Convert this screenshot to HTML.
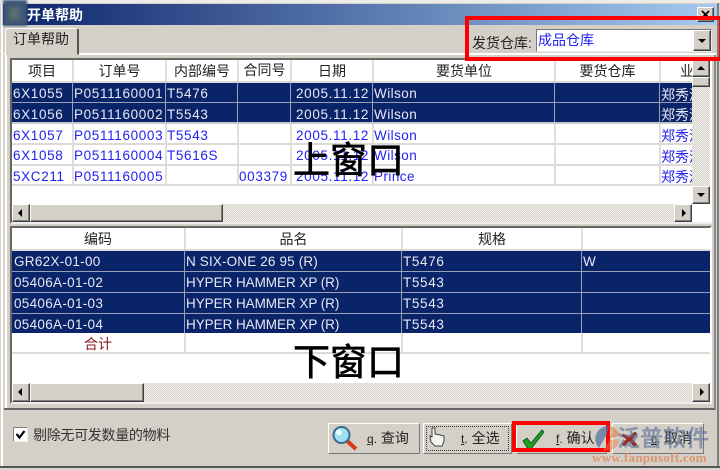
<!DOCTYPE html>
<html><head><meta charset="utf-8">
<style>
html,body{margin:0;padding:0;background:#d4d0c8}
#p{position:relative;width:720px;height:470px;overflow:hidden;background:#d4d0c8;font-family:"Liberation Sans","Noto Sans CJK SC",sans-serif;font-size:14px;color:#111;filter:blur(.35px)}
#p div{position:absolute;box-sizing:border-box}
.t{white-space:nowrap;line-height:20px;height:20px;letter-spacing:0}
.d{white-space:nowrap;line-height:20px;height:20px;font-size:13.5px;letter-spacing:.65px}
.m{letter-spacing:.3px}
.n{letter-spacing:-.05px}
.o{letter-spacing:.45px}
.nav{background:#0a246a}
.w{color:#e8e8f2}
.b{color:#2222ee}
.h{white-space:nowrap;text-align:center;line-height:20px;height:20px;color:#222}
.vl{width:2px;background:#e0ded8}
.hl{height:2px;background:#dcdad4}
.raised{background:#d4d0c8;border:1px solid;border-color:#fff #404040 #404040 #fff;box-shadow:inset -1px -1px 0 #808080}
.sb{background:repeating-conic-gradient(#d4d0c8 0 25%,#f4f2ee 0 50%) 0 0/2px 2px}
.btn{background:#d4d0c8;border:1px solid;border-color:#fff #777 #777 #fff;top:423px;height:31px}
.lbl{top:428px;line-height:20px;white-space:nowrap;color:#222}
.lbl u,.lbl i{font-size:12px;font-style:normal}
.big{font-size:37px;line-height:50px;color:#000;white-space:nowrap;-webkit-text-stroke:.7px #000}
u{text-decoration:underline}
</style></head><body><div id="p">

<!-- frame -->
<div style="left:0;top:0;width:720px;height:3px;background:#eeece8"></div>
<div style="left:0;top:466px;width:720px;height:4px;background:#d8d6d0;border-top:2px solid #555"></div>
<div style="left:1px;top:3px;width:2px;height:463px;background:#fff"></div>
<div style="left:717px;top:3px;width:2px;height:463px;background:#808080"></div>

<!-- title -->
<div style="left:3px;top:4px;width:714px;height:21px;background:linear-gradient(90deg,#0a246a,#a6caf0)"></div>
<div style="left:3px;top:0;width:24px;height:26px;background:#3d5578;filter:blur(1px)"></div>
<div style="left:9px;top:7px;width:11px;height:13px;background:#5a7070;filter:blur(2px)"></div>
<div class="t" style="left:27px;top:5px;color:#fff;font-weight:bold">开单帮助</div>
<div class="raised" style="left:697px;top:7px;width:17px;height:15px"></div>
<svg style="position:absolute;left:701px;top:10px" width="10" height="9"><path d="M1 1 L8 8 M8 1 L1 8" stroke="#000" stroke-width="1.8" fill="none"/></svg>

<!-- tab -->
<div style="left:4px;top:53px;width:712px;height:2px;background:#fff"></div>
<div style="left:5px;top:28px;width:74px;height:27px;background:#d4d0c8;border:1px solid;border-color:#fff #555 transparent #fff;border-right-width:2px;border-radius:3px 3px 0 0"></div>
<div class="t" style="left:13px;top:29px;color:#222">订单帮助</div>
<div style="left:5px;top:55px;width:2px;height:354px;background:#fff"></div>
<div style="left:4px;top:408px;width:712px;height:2px;background:#666"></div>
<div style="left:714px;top:55px;width:2px;height:354px;background:#888"></div>

<!-- upper grid -->
<div style="left:10px;top:58px;width:702px;height:166px;background:#fff;border:2px solid;border-color:#666 #fff #eee #666"></div>
<div class="nav" style="left:12px;top:82px;width:680px;height:20px"></div>
<div class="nav" style="left:12px;top:103px;width:680px;height:19px"></div>
<div class="hl" style="left:12px;top:81px;width:680px"></div>
<div class="hl" style="left:12px;top:102px;width:680px;height:1px;background:#9aa0b4"></div>
<div class="hl" style="left:12px;top:122px;width:680px;background:#c8c8cc"></div>
<div class="hl" style="left:12px;top:143px;width:680px"></div>
<div class="hl" style="left:12px;top:164px;width:680px"></div>
<div class="hl" style="left:12px;top:184px;width:680px"></div>
<div class="vl" style="left:72px;top:60px;height:21px"></div><div class="vl" style="left:72px;top:82px;height:40px;width:1px;background:#9aa0b4"></div><div class="vl" style="left:72px;top:124px;height:62px"></div>
<div class="vl" style="left:165px;top:60px;height:21px"></div><div class="vl" style="left:165px;top:82px;height:40px;width:1px;background:#9aa0b4"></div><div class="vl" style="left:165px;top:124px;height:62px"></div>
<div class="vl" style="left:237px;top:60px;height:21px"></div><div class="vl" style="left:237px;top:82px;height:40px;width:1px;background:#9aa0b4"></div><div class="vl" style="left:237px;top:124px;height:62px"></div>
<div class="vl" style="left:290px;top:60px;height:21px"></div><div class="vl" style="left:290px;top:82px;height:40px;width:1px;background:#9aa0b4"></div><div class="vl" style="left:290px;top:124px;height:62px"></div>
<div class="vl" style="left:372px;top:60px;height:21px"></div><div class="vl" style="left:372px;top:82px;height:40px;width:1px;background:#9aa0b4"></div><div class="vl" style="left:372px;top:124px;height:62px"></div>
<div class="vl" style="left:554px;top:60px;height:21px"></div><div class="vl" style="left:554px;top:82px;height:40px;width:1px;background:#9aa0b4"></div><div class="vl" style="left:554px;top:124px;height:62px"></div>
<div class="vl" style="left:659px;top:60px;height:21px"></div><div class="vl" style="left:659px;top:82px;height:40px;width:1px;background:#9aa0b4"></div><div class="vl" style="left:659px;top:124px;height:62px"></div>

<div class="h" style="left:12px;top:61px;width:60px">项目</div>
<div class="h" style="left:74px;top:61px;width:91px">订单号</div>
<div class="h" style="left:167px;top:61px;width:70px">内部编号</div>
<div class="h" style="left:239px;top:60px;width:51px">合同号</div>
<div class="h" style="left:292px;top:61px;width:80px">日期</div>
<div class="h" style="left:374px;top:61px;width:180px">要货单位</div>
<div class="h" style="left:556px;top:61px;width:103px">要货仓库</div>
<div class="t" style="left:680px;top:61px;width:12px;overflow:hidden;color:#222">业务</div>

<div class="d w" style="left:13px;top:84px">6X1055</div>
<div class="d w" style="left:74px;top:84px">P0511160001</div>
<div class="d w" style="left:167px;top:84px">T5476</div>
<div class="d w" style="left:296px;top:84px">2005.11.12</div>
<div class="d o w" style="left:374px;top:84px">Wilson</div>
<div class="t w" style="left:661px;top:85px;width:31px;overflow:hidden">郑秀清</div>

<div class="d w" style="left:13px;top:105px">6X1056</div>
<div class="d w" style="left:74px;top:105px">P0511160002</div>
<div class="d w" style="left:167px;top:105px">T5543</div>
<div class="d w" style="left:296px;top:105px">2005.11.12</div>
<div class="d o w" style="left:374px;top:105px">Wilson</div>
<div class="t w" style="left:661px;top:105px;width:31px;overflow:hidden">郑秀清</div>

<div class="d b" style="left:13px;top:126px">6X1057</div>
<div class="d b" style="left:74px;top:126px">P0511160003</div>
<div class="d b" style="left:167px;top:126px">T5543</div>
<div class="d b" style="left:296px;top:126px">2005.11.12</div>
<div class="d o b" style="left:374px;top:126px">Wilson</div>
<div class="t b" style="left:661px;top:126px;width:31px;overflow:hidden">郑秀清</div>

<div class="d b" style="left:13px;top:146px">6X1058</div>
<div class="d b" style="left:74px;top:146px">P0511160004</div>
<div class="d b" style="left:167px;top:146px">T5616S</div>
<div class="d b" style="left:296px;top:146px">2005.11.12</div>
<div class="d o b" style="left:374px;top:146px">Wilson</div>
<div class="t b" style="left:661px;top:147px;width:31px;overflow:hidden">郑秀清</div>

<div class="d b" style="left:13px;top:167px">5XC211</div>
<div class="d b" style="left:74px;top:167px">P0511160005</div>
<div class="d b" style="left:239px;top:167px">003379</div>
<div class="d b" style="left:296px;top:167px">2005.11.12</div>
<div class="d o b" style="left:374px;top:167px">Prince</div>
<div class="t b" style="left:661px;top:167px;width:31px;overflow:hidden">郑秀清</div>

<!-- upper v scrollbar -->
<div class="sb" style="left:692px;top:60px;width:18px;height:144px"></div>
<div class="raised" style="left:692px;top:60px;width:18px;height:17px"></div>
<div style="left:697px;top:66px;width:0;height:0;border:4px solid transparent;border-bottom:4px solid #000;border-top:0"></div>
<div class="raised" style="left:692px;top:77px;width:18px;height:10px"></div>
<div class="raised" style="left:692px;top:186px;width:18px;height:18px"></div>
<div style="left:697px;top:193px;width:0;height:0;border:4px solid transparent;border-top:4px solid #000;border-bottom:0"></div>
<!-- upper h scrollbar -->
<div class="sb" style="left:12px;top:204px;width:680px;height:18px"></div>
<div class="raised" style="left:12px;top:204px;width:18px;height:18px"></div>
<div style="left:18px;top:209px;width:0;height:0;border:4px solid transparent;border-right:4px solid #000;border-left:0"></div>
<div class="raised" style="left:30px;top:204px;width:193px;height:18px"></div>
<div class="raised" style="left:674px;top:204px;width:18px;height:18px"></div>
<div style="left:682px;top:209px;width:0;height:0;border:4px solid transparent;border-left:4px solid #000;border-right:0"></div>

<!-- lower grid -->
<div style="left:10px;top:226px;width:702px;height:178px;background:#fff;border:2px solid;border-color:#666 #fff #eee #666"></div>
<div class="nav" style="left:12px;top:250px;width:698px;height:21px"></div>
<div class="nav" style="left:12px;top:272px;width:698px;height:20px"></div>
<div class="nav" style="left:12px;top:293px;width:698px;height:20px"></div>
<div class="nav" style="left:12px;top:314px;width:698px;height:19px"></div>
<div class="hl" style="left:12px;top:249px;width:698px"></div>
<div class="hl" style="left:12px;top:352px;width:698px"></div>
<div class="hl" style="left:12px;top:271px;width:698px;height:1px;background:#9aa0b4"></div>
<div class="hl" style="left:12px;top:292px;width:698px;height:1px;background:#9aa0b4"></div>
<div class="hl" style="left:12px;top:313px;width:698px;height:1px;background:#9aa0b4"></div>
<div class="vl" style="left:184px;top:228px;height:21px"></div><div class="vl" style="left:184px;top:250px;height:83px;width:1px;background:#9aa0b4"></div><div class="vl" style="left:184px;top:333px;height:20px"></div>
<div class="vl" style="left:401px;top:228px;height:21px"></div><div class="vl" style="left:401px;top:250px;height:83px;width:1px;background:#9aa0b4"></div><div class="vl" style="left:401px;top:333px;height:20px"></div>
<div class="vl" style="left:581px;top:228px;height:21px"></div><div class="vl" style="left:581px;top:250px;height:83px;width:1px;background:#9aa0b4"></div><div class="vl" style="left:581px;top:333px;height:20px"></div>

<div class="h" style="left:12px;top:229px;width:172px">编码</div>
<div class="h" style="left:186px;top:229px;width:215px">品名</div>
<div class="h" style="left:403px;top:229px;width:178px">规格</div>

<div class="d m w" style="left:14px;top:252px">GR62X-01-00</div>
<div class="d w" style="left:186px;top:252px;letter-spacing:.15px">N SIX-ONE 26 95 (R)</div>
<div class="d w" style="left:403px;top:252px">T5476</div>
<div class="d w" style="left:583px;top:252px">W</div>

<div class="d m w" style="left:14px;top:273px">05406A-01-02</div>
<div class="d n w" style="left:186px;top:273px">HYPER HAMMER XP (R)</div>
<div class="d w" style="left:403px;top:273px">T5543</div>

<div class="d m w" style="left:14px;top:294px">05406A-01-03</div>
<div class="d n w" style="left:186px;top:294px">HYPER HAMMER XP (R)</div>
<div class="d w" style="left:403px;top:294px">T5543</div>

<div class="d m w" style="left:14px;top:315px">05406A-01-04</div>
<div class="d n w" style="left:186px;top:315px">HYPER HAMMER XP (R)</div>
<div class="d w" style="left:403px;top:315px">T5543</div>

<div class="h" style="left:12px;top:334px;width:172px;color:#8b1a1a">合计</div>

<!-- lower h scrollbar -->
<div class="sb" style="left:12px;top:383px;width:698px;height:19px"></div>
<div class="raised" style="left:12px;top:383px;width:18px;height:19px"></div>
<div style="left:18px;top:388px;width:0;height:0;border:4px solid transparent;border-right:4px solid #000;border-left:0"></div>
<div class="raised" style="left:30px;top:383px;width:114px;height:19px"></div>
<div class="raised" style="left:692px;top:383px;width:18px;height:19px"></div>
<div style="left:700px;top:388px;width:0;height:0;border:4px solid transparent;border-left:4px solid #000;border-right:0"></div>

<!-- big labels -->
<div class="big" style="left:293px;top:136px">上窗口</div>
<div class="big" style="left:293px;top:338px">下窗口</div>

<!-- warehouse -->
<div class="t" style="left:472px;top:33px;color:#222">发货仓库:</div>
<div style="left:536px;top:29px;width:176px;height:23px;background:#fff;border:1px solid;border-color:#777 #eee #eee #777"></div>
<div class="t" style="left:538px;top:30px;color:#2222ee">成品仓库</div>
<div class="raised" style="left:693px;top:30px;width:18px;height:21px"></div>
<div style="left:698px;top:39px;width:0;height:0;border:4px solid transparent;border-top:4px solid #000;border-bottom:0"></div>
<div style="left:465px;top:16px;width:258px;height:45px;border:4px solid #f00"></div>

<!-- checkbox -->
<div style="left:13px;top:427px;width:15px;height:15px;background:#fff;border:1px solid;border-color:#808080 #eee #eee #808080"></div>
<svg style="position:absolute;left:13px;top:427px" width="15" height="15"><path d="M3.5 7 L6.5 10.5 L11.500 4" fill="none" stroke="#000" stroke-width="2.2"/></svg>
<div class="t" style="left:33px;top:425px;color:#333;letter-spacing:-.3px">剔除无可发数量的物料</div>

<!-- buttons -->
<div class="btn" style="left:328px;width:92px"></div>
<svg style="position:absolute;left:331px;top:425px" width="28" height="27"><line x1="14" y1="14" x2="25" y2="24" stroke="#d83a10" stroke-width="4"/><circle cx="10.500" cy="10" r="8" fill="#9fe0f2" stroke="#3a6a90" stroke-width="2"/><circle cx="8" cy="7.500" r="3" fill="#e8fbff"/></svg>
<div class="lbl" style="left:367px"><u>q</u><i>.</i> 查询</div>

<div class="btn" style="left:423px;width:89px"></div>
<div style="left:426px;top:426px;width:83px;height:25px;border:1px dotted #333"></div>
<svg style="position:absolute;left:427px;top:426px" width="20" height="24"><path d="M5 2 L5 11 L3 10 L4 16 L8 20 L15 20 L17 15 L17 10 L13 9 L8 8 L8 2 Z" fill="#f4f4f0" stroke="#444" stroke-width="1"/></svg>
<div class="lbl" style="left:461px"><u>t</u><i>.</i> 全选</div>

<div class="btn" style="left:516px;width:91px"></div>
<svg style="position:absolute;left:522px;top:428px" width="24" height="22"><path d="M1 13 L5 10 L9 15 L20 2 L22 4 L9 21 L6 21 Z" fill="#1fa01f" stroke="#0a4a20" stroke-width=".8"/></svg>
<div class="lbl" style="left:556px"><u>f</u><i>.</i> 确认</div>
<div style="left:512px;top:421px;width:98px;height:31px;border:4px solid #f00"></div>

<div class="btn" style="left:612px;width:92px"></div>
<svg style="position:absolute;left:622px;top:432px" width="16" height="15"><path d="M1 2 L7 5 L13 0 L15 2 L10 7 L15 13 L12 14 L7 9 L2 14 L0 12 L5 7 L0 4 Z" fill="#b8201a" stroke="#444" stroke-width=".6"/></svg>
<div class="lbl" style="left:651px"><u>c</u><i>.</i> 取消</div>

<!-- watermark -->
<svg style="position:absolute;left:592px;top:424px" width="30" height="30"><path d="M17 2 A13 13 0 0 0 7 24 L15 10 Z" fill="#4d6d9a" opacity=".7"/><path d="M17 2 A13 13 0 0 1 28 12 L18 14 L20 8 Z" fill="#e08050" opacity=".65"/><path d="M11 26 A13 13 0 0 0 28 15 L18 16 Z" fill="#e08050" opacity=".45"/></svg>
<div style="left:617px;top:421px;font-size:23px;line-height:34px;font-weight:bold;color:#5b7099;opacity:.62;white-space:nowrap">泛普软件</div>
<div style="left:592px;top:450px;font-family:'Liberation Serif',serif;font-size:13px;font-weight:bold;line-height:15px;color:#e08a60;opacity:.85;white-space:nowrap;letter-spacing:.3px">www.fanpusoft.com</div>

</div></body></html>
